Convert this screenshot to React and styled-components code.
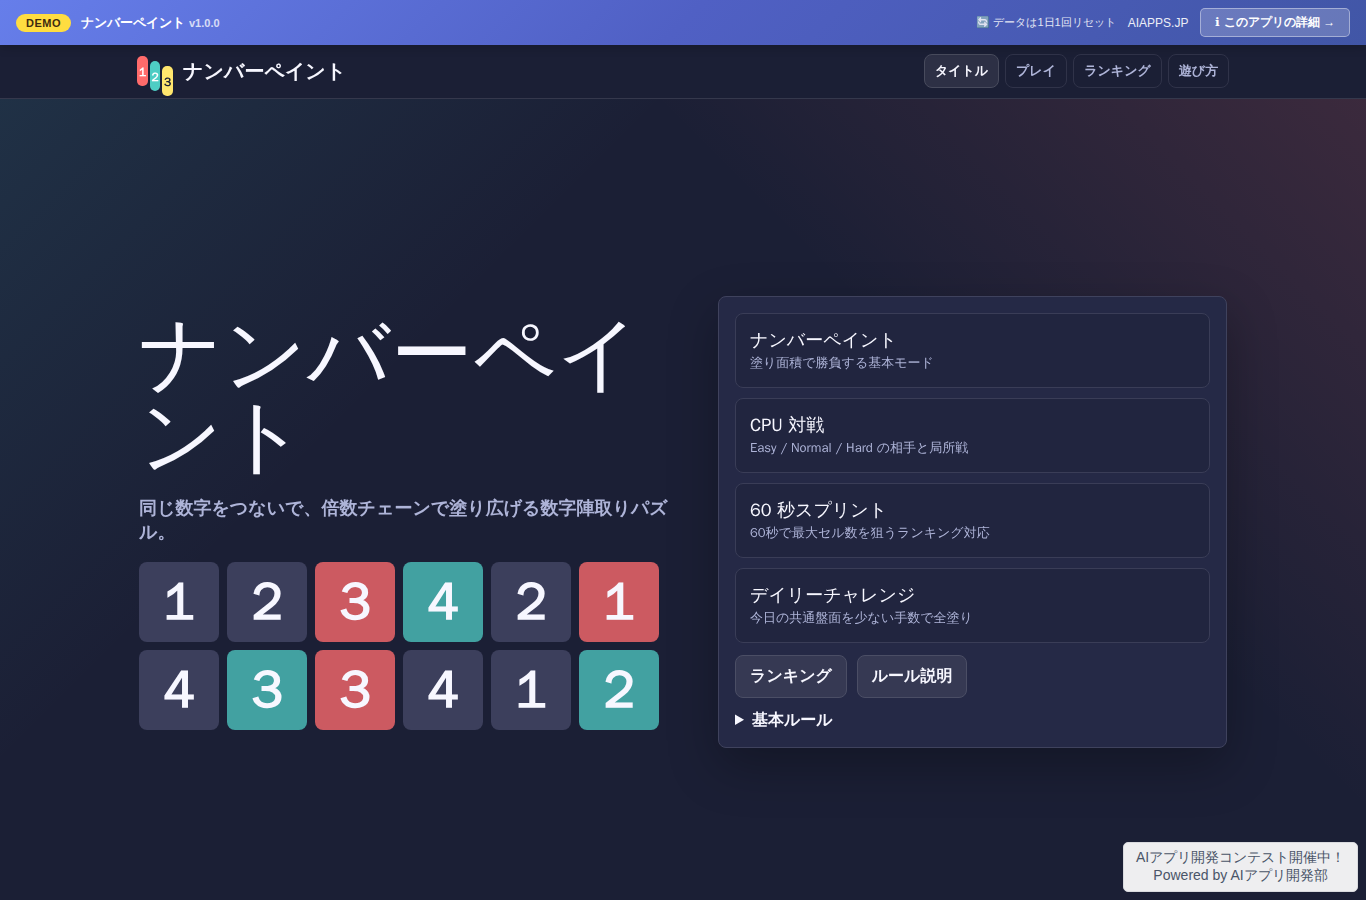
import React from 'react';
import styled, { createGlobalStyle } from 'styled-components';

const jp = '"WenQuanYi Zen Hei", "Noto Sans CJK JP", sans-serif';
const arial = '"Liberation Sans", sans-serif';

const Global = createGlobalStyle`
  *, *::before, *::after { box-sizing: border-box; }
  body {
    margin: 0;
    background: #1a1a2e;
    color: #f7f7ff;
    font-family: ${jp};
    overflow: hidden;
  }
  button { font: inherit; color: inherit; margin: 0; }
`;

const Page = styled.div`
  display: flex;
  flex-direction: column;
  height: 900px;
  background:
    linear-gradient(135deg, rgba(70, 190, 200, 0.13), transparent 34%),
    linear-gradient(225deg, rgba(255, 107, 107, 0.16), transparent 36%),
    #1b1f35;
`;

const DemoBar = styled.div`
  display: flex;
  align-items: center;
  flex: none;
  height: 45px;
  padding: 0 16px;
  font-family: ${arial};
  color: #fff;
  background: linear-gradient(135deg, #667eea, #5060c4 50%, #4156a6);
  box-shadow: 0 2px 10px rgba(0, 0, 0, 0.2);
  position: relative;
  z-index: 1;
`;

const DemoBadge = styled.span`
  width: 55px;
  height: 18px;
  border-radius: 9px;
  background: #ffdd40;
  color: #3d2b10;
  font: 700 11px/18px ${arial};
  letter-spacing: 0.5px;
  text-align: center;
`;

const DemoName = styled.span`
  margin-left: 10px;
  font-size: 13px;
  font-weight: 700;
  white-space: nowrap;
`;

const Version = styled.span`
  margin-left: 4px;
  font-size: 11px;
  font-weight: 700;
  opacity: 0.75;
`;

const DemoLinks = styled.div`
  display: flex;
  align-items: center;
  gap: 12px;
  margin-left: auto;
  white-space: nowrap;
`;

const ResetNote = styled.span`
  font-size: 11px;
  opacity: 0.85;
`;

const SiteLink = styled.span`
  font-size: 12px;
  opacity: 0.9;
`;

const DetailButton = styled.button`
  width: 149.6px;
  height: 29px;
  padding: 0;
  border: 1px solid rgba(255, 255, 255, 0.4);
  border-radius: 5px;
  background: rgba(255, 255, 255, 0.2);
  font-size: 12px;
  font-weight: 700;
`;

const InfoGlyph = styled.span`
  font-family: "DejaVu Sans", sans-serif;
  letter-spacing: 0.8px;
`;

const Header = styled.header`
  flex: none;
  height: 54px;
  background: #1b1f35;
  border-bottom: 1px solid #35384c;
`;

const HeaderInner = styled.div`
  display: flex;
  align-items: center;
  justify-content: space-between;
  width: 1092px;
  height: 52px;
  margin: 0 auto;
`;

const Brand = styled.div`
  display: flex;
  align-items: center;
  font-size: 20px;
  font-weight: 900;
`;

const Logo = styled.svg`
  width: 36px;
  height: 42px;
  margin: 10px 10px 0 0;
  font: 900 12px ${jp};
  text-anchor: middle;
`;

const Nav = styled.nav`
  display: flex;
  gap: 6px;
`;

const NavItem = styled.button`
  width: ${(p) => p.$w}px;
  height: 34px;
  padding: 0;
  border: 1px solid ${(p) => (p.$active ? '#484b5d' : '#303349')};
  border-radius: 8px;
  background: ${(p) => (p.$active ? '#2d3045' : 'transparent')};
  color: ${(p) => (p.$active ? '#f7f7ff' : '#aeb4d8')};
  font-size: 13px;
  font-weight: 900;
`;

const Main = styled.main`
  flex: 1;
  display: flex;
  align-items: center;
  justify-content: space-between;
  width: 1088px;
  margin: 0 auto;
  padding-top: 45px;
`;

const Hero = styled.section`
  width: 531px;
`;

const Title = styled.h1`
  margin: 0;
  font-size: 82px;
  font-weight: 400;
  line-height: 82px;
  word-break: break-all;
`;

const Lead = styled.p`
  margin: 18px 0;
  color: #aeb4d8;
  font-size: 18px;
  font-weight: 900;
  line-height: 24px;
`;

const Board = styled.div`
  display: grid;
  grid-template-columns: repeat(6, 80px);
  grid-auto-rows: 80px;
  gap: 8px;
`;

const tones = { plain: '#3c3f5c', red: '#cc5a61', teal: '#42a1a1' };

const Tile = styled.div`
  display: grid;
  place-items: center;
  border-radius: 8px;
  background: ${(p) => tones[p.$tone]};
  font: 900 52px/80px ${jp};
`;

const Panel = styled.section`
  width: 509px;
  padding: 16px;
  border: 1px solid #3f425d;
  border-radius: 8px;
  background: #252946;
  box-shadow: 0 18px 50px rgba(0, 0, 0, 0.28);
`;

const Modes = styled.div`
  display: grid;
  gap: 10px;
`;

const Mode = styled.button`
  display: block;
  height: 75px;
  padding: 0 14px;
  border: 1px solid #3a3d57;
  border-radius: 8px;
  background: #21253f;
  text-align: left;
`;

const ModeName = styled.span`
  display: block;
  margin-bottom: 1px;
  font-size: 18px;
  line-height: 23px;
`;

const ModeText = styled.span`
  display: block;
  color: #aeb4d8;
  font-size: 13px;
  line-height: 20px;
`;

const Actions = styled.div`
  display: flex;
  gap: 10px;
  margin-top: 12px;
`;

const Action = styled.button`
  width: ${(p) => p.$w}px;
  height: 43px;
  padding: 0;
  border: 1px solid #4b4e65;
  border-radius: 8px;
  background: #363953;
  font-size: 16px;
  font-weight: 900;
`;

const Rules = styled.details`
  margin-top: 11px;
  font-size: 16px;
  font-weight: 900;
  line-height: 22px;
`;

const Contest = styled.aside`
  position: fixed;
  right: 8px;
  bottom: 8px;
  width: 235px;
  height: 50px;
  padding: 5px 0;
  border: 1px solid #d9dade;
  border-radius: 5px;
  background: #eeeef0;
  color: #4a5568;
  font: 14px/18px ${arial};
  text-align: center;
`;

const tiles = [
  [1, 'plain'], [2, 'plain'], [3, 'red'], [4, 'teal'], [2, 'plain'], [1, 'red'],
  [4, 'plain'], [3, 'teal'], [3, 'red'], [4, 'plain'], [1, 'plain'], [2, 'teal'],
];

const modes = [
  ['ナンバーペイント', '塗り面積で勝負する基本モード'],
  ['CPU 対戦', 'Easy / Normal / Hard の相手と局所戦'],
  ['60 秒スプリント', '60秒で最大セル数を狙うランキング対応'],
  ['デイリーチャレンジ', '今日の共通盤面を少ない手数で全塗り'],
];

export default function App() {
  return (
    <Page>
      <Global />
      <DemoBar>
        <DemoBadge>DEMO</DemoBadge>
        <DemoName>ナンバーペイント</DemoName>
        <Version>v1.0.0</Version>
        <DemoLinks>
          <ResetNote>🔄 データは1日1回リセット</ResetNote>
          <SiteLink>AIAPPS.JP</SiteLink>
          <DetailButton><InfoGlyph>ℹ</InfoGlyph> このアプリの詳細 →</DetailButton>
        </DemoLinks>
      </DemoBar>
      <Header>
        <HeaderInner>
          <Brand>
            <Logo viewBox="0 0 36 42">
              <rect x="0" y="1" width="11" height="30" rx="5" fill="#ff6b6b" />
              <rect x="13" y="6" width="10" height="30" rx="5" fill="#4ecdc4" />
              <rect x="25" y="11" width="11" height="30" rx="5" fill="#ffe66d" />
              <text x="5.5" y="20.5" fill="#fff">1</text>
              <text x="18" y="25.5" fill="#fff">2</text>
              <text x="30.5" y="30.5" fill="#1b1f35">3</text>
            </Logo>
            ナンバーペイント
          </Brand>
          <Nav>
            <NavItem $w={75} $active>タイトル</NavItem>
            <NavItem $w={62}>プレイ</NavItem>
            <NavItem $w={89}>ランキング</NavItem>
            <NavItem $w={61}>遊び方</NavItem>
          </Nav>
        </HeaderInner>
      </Header>
      <Main>
        <Hero>
          <Title>ナンバーペイント</Title>
          <Lead>同じ数字をつないで、倍数チェーンで塗り広げる数字陣取りパズル。</Lead>
          <Board>
            {tiles.map(([n, tone], i) => <Tile key={i} $tone={tone}>{n}</Tile>)}
          </Board>
        </Hero>
        <Panel>
          <Modes>
            {modes.map(([name, text]) => (
              <Mode key={name}>
                <ModeName>{name}</ModeName>
                <ModeText>{text}</ModeText>
              </Mode>
            ))}
          </Modes>
          <Actions>
            <Action $w={112}>ランキング</Action>
            <Action $w={110}>ルール説明</Action>
          </Actions>
          <Rules><summary>基本ルール</summary></Rules>
        </Panel>
      </Main>
      <Contest>AIアプリ開発コンテスト開催中！<br />Powered by AIアプリ開発部</Contest>
    </Page>
  );
}
